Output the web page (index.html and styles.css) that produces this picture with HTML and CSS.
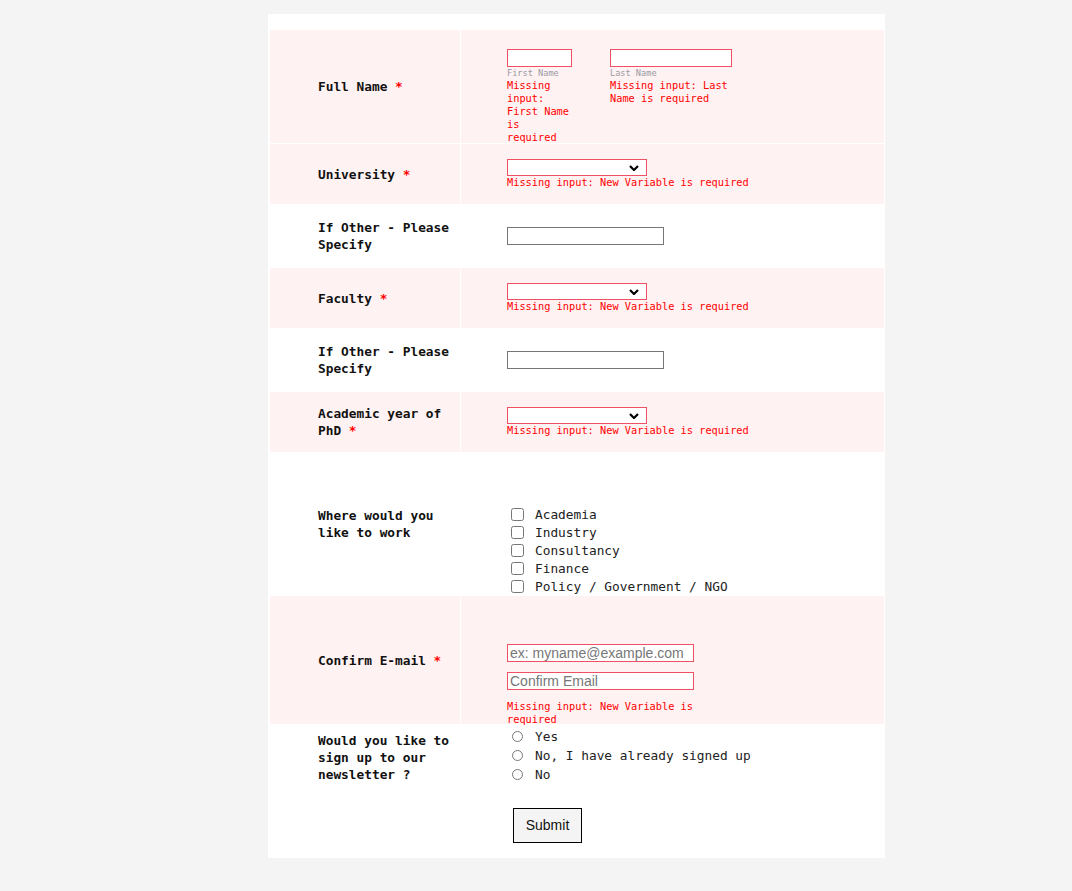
FILE: index.html
```html
<!DOCTYPE html>
<html>
<head>
<meta charset="utf-8">
<link rel="stylesheet" href="styles.css">
</head>
<body>
<form class="card">
  <div class="row pink row-name">
    <div class="label"><div class="label-text">Full Name <span class="req">*</span></div></div>
    <div class="content content-top">
      <div class="name-fields">
        <div class="name-col first">
          <input class="inp err w-first" type="text">
          <div class="sub">First Name</div>
          <div class="error">Missing input: First Name is required</div>
        </div>
        <div class="name-col last">
          <input class="inp err w-last" type="text">
          <div class="sub">Last Name</div>
          <div class="error">Missing input: Last Name is required</div>
        </div>
      </div>
    </div>
  </div>

  <div class="row pink row-60">
    <div class="label"><div class="label-text">University <span class="req">*</span></div></div>
    <div class="content">
      <div class="sel-wrap"><select class="sel"><option></option></select><svg class="chev" viewBox="0 0 10 6" width="10" height="6"><path d="M1 1 L5 5 L9 1" fill="none" stroke="#000" stroke-width="2.2"/></svg></div>
      <div class="error">Missing input: New Variable is required</div>
    </div>
  </div>

  <div class="row row-64">
    <div class="label"><div class="label-text">If Other - Please Specify</div></div>
    <div class="content"><input class="inp plain w-other" type="text"></div>
  </div>

  <div class="row pink row-60">
    <div class="label"><div class="label-text">Faculty <span class="req">*</span></div></div>
    <div class="content">
      <div class="sel-wrap"><select class="sel"><option></option></select><svg class="chev" viewBox="0 0 10 6" width="10" height="6"><path d="M1 1 L5 5 L9 1" fill="none" stroke="#000" stroke-width="2.2"/></svg></div>
      <div class="error">Missing input: New Variable is required</div>
    </div>
  </div>

  <div class="row row-64">
    <div class="label"><div class="label-text">If Other - Please Specify</div></div>
    <div class="content"><input class="inp plain w-other" type="text"></div>
  </div>

  <div class="row pink row-60">
    <div class="label"><div class="label-text">Academic year of PhD <span class="req">*</span></div></div>
    <div class="content">
      <div class="sel-wrap"><select class="sel"><option></option></select><svg class="chev" viewBox="0 0 10 6" width="10" height="6"><path d="M1 1 L5 5 L9 1" fill="none" stroke="#000" stroke-width="2.2"/></svg></div>
      <div class="error">Missing input: New Variable is required</div>
    </div>
  </div>

  <div class="row row-work">
    <div class="label"><div class="label-text">Where would you like to work</div></div>
    <div class="content content-work">
      <label class="check"><input type="checkbox"><span>Academia</span></label>
      <label class="check"><input type="checkbox"><span>Industry</span></label>
      <label class="check"><input type="checkbox"><span>Consultancy</span></label>
      <label class="check"><input type="checkbox"><span>Finance</span></label>
      <label class="check"><input type="checkbox"><span>Policy / Government / NGO</span></label>
    </div>
  </div>

  <div class="row pink row-email">
    <div class="label"><div class="label-text">Confirm E-mail <span class="req">*</span></div></div>
    <div class="content content-email">
      <input class="inp err w-email" type="text" placeholder="ex: myname@example.com">
      <input class="inp err w-email second" type="text" placeholder="Confirm Email">
      <div class="error email-error">Missing input: New Variable is required</div>
    </div>
  </div>

  <div class="row row-news">
    <div class="label label-top"><div class="label-text">Would you like to sign up to our newsletter ?</div></div>
    <div class="content content-news">
      <label class="radio"><input type="radio" name="news"><span>Yes</span></label>
      <label class="radio"><input type="radio" name="news"><span>No, I have already signed up</span></label>
      <label class="radio"><input type="radio" name="news"><span>No</span></label>
    </div>
  </div>

  <div class="submit-row">
    <button type="button" class="submit">Submit</button>
  </div>
</form>
</body>
</html>
```

FILE: styles.css
```css
html, body {
  margin: 0;
  padding: 0;
  background: #f4f4f4;
}

body {
  font-family: "DejaVu Sans Mono", "Liberation Mono", monospace;
  color: #111;
  min-height: 891px;
}

.card {
  box-sizing: border-box;
  margin: 14px 0 0 268px;
  width: 617px;
  height: 844px;
  background: #fff;
  padding: 16px 1px 0 2px;
  display: flex;
  flex-direction: column;
}

.row {
  display: flex;
  gap: 1px;
  box-sizing: border-box;
}

.row.pink .label,
.row.pink .content {
  background: #fff2f2;
}

.label {
  box-sizing: border-box;
  width: 190px;
  flex: none;
  padding: 0 2px 0 48px;
  font-size: 12.8px;
  line-height: 17px;
  font-weight: bold;
  display: flex;
  align-items: center;
}

.label-text {
  display: block;
}

.label .req {
  color: #f00;
}

.content {
  flex: 1;
  box-sizing: border-box;
  padding-left: 46px;
  display: flex;
  flex-direction: column;
  justify-content: center;
}

.row-name { height: 113px; margin-bottom: 1px; }
.row-60 { height: 60px; }
.row-64 { height: 64px; }
.row-work { height: 144px; }
.row-email { height: 128px; }
.row-news { height: 72px; }

.content-top {
  justify-content: flex-start;
  padding-top: 19px;
}

.name-fields {
  display: flex;
  gap: 39px;
}

.name-col.first { width: 64px; }
.name-col.last { width: 122px; }

.inp {
  box-sizing: border-box;
  display: block;
  height: 18px;
  margin: 0;
  padding: 0 2px;
  background: #fff;
  font-family: "Liberation Sans", Arial, sans-serif;
  font-size: 14px;
}

.inp::placeholder {
  color: #777;
}

.inp.err { border: 1px solid #ef5064; }
.inp.plain { border: 1px solid #767676; }

.w-first { width: 65px; }
.w-last { width: 122px; }
.w-other { width: 157px; }
.w-email { width: 187px; }

.sub {
  font-size: 8.6px;
  line-height: 11px;
  color: #9a9aa6;
  margin-top: 1px;
}

.error {
  color: #f00;
  font-size: 10.3px;
  line-height: 13px;
}

.sel-wrap {
  position: relative;
  width: 140px;
  height: 17px;
}

.sel {
  appearance: none;
  -webkit-appearance: none;
  box-sizing: border-box;
  display: block;
  width: 140px;
  height: 17px;
  margin: 0;
  padding: 0;
  border: 1px solid #ef5064;
  border-radius: 0;
  background: #fff;
}

.chev {
  position: absolute;
  right: 8px;
  top: 6px;
}

.content-work {
  justify-content: flex-start;
  padding-top: 53px;
}

.check, .radio {
  display: flex;
  align-items: center;
  font-size: 12.8px;
  color: #222;
}

.check { height: 18px; }
.radio { height: 19px; }

.check input {
  margin: 0 11px 0 4px;
  width: 13px;
  height: 13px;
}

.radio input {
  margin: 0 12px 0 5px;
  width: 11px;
  height: 11px;
}

.content-email {
  justify-content: flex-start;
  padding-top: 48px;
}

.content-email .second { margin-top: 10px; }

.email-error {
  width: 190px;
  margin-top: 10px;
}

.content-news {
  justify-content: flex-start;
  padding-top: 3px;
}

.label-top {
  align-items: flex-start;
  padding-top: 8px;
}

.submit-row {
  padding: 12px 0 0 243px;
}

.submit {
  box-sizing: border-box;
  width: 69px;
  height: 35px;
  margin: 0;
  border: 1px solid #000;
  background: #f4f4f4;
  font-family: "Liberation Sans", Arial, sans-serif;
  font-size: 14px;
  color: #111;
  padding: 0 0 1px;
}
```
